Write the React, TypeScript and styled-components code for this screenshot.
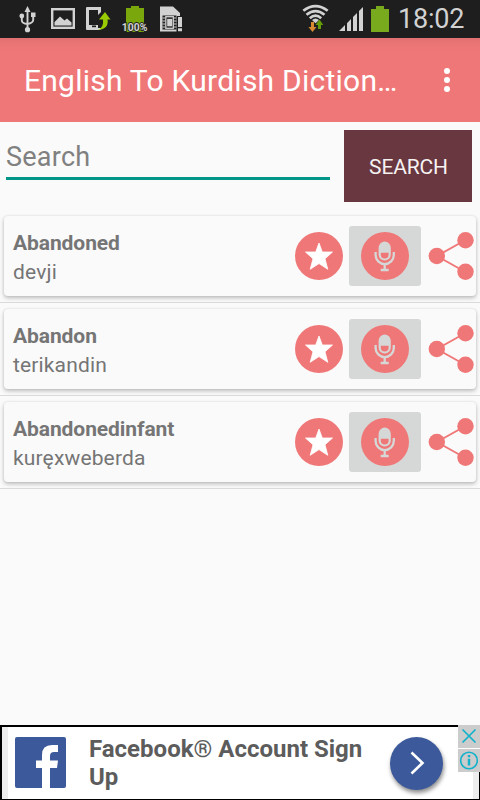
import React from 'react';
import styled, { createGlobalStyle } from 'styled-components';

const CORAL = '#f07777';

const GlobalStyle = createGlobalStyle`
  * { box-sizing: border-box; }
  html, body { margin: 0; padding: 0; }
  body { background: #fafafa; font-family: Roboto, sans-serif; overflow: hidden; }
  button { font-family: inherit; border: 0; padding: 0; margin: 0; background: none; }
  svg { display: block; flex: none; }
`;

const Screen = styled.div`
  width: 480px;
  height: 800px;
  display: flex;
  flex-direction: column;
  background: #fafafa;
`;

const StatusBar = styled.header`
  height: 38px;
  flex: none;
  display: flex;
  justify-content: space-between;
  background: #1e1e1e;
`;

const StatusGroup = styled.div`
  display: flex;
`;

const Clock = styled.span`
  width: 88px;
  padding-left: 6px;
  font-size: 27px;
  line-height: 39px;
  letter-spacing: -0.2px;
  color: #d2d2d2;
`;

const AppBar = styled.div`
  height: 84px;
  flex: none;
  display: flex;
  align-items: center;
  justify-content: space-between;
  padding: 0 30px 0 24px;
  background: linear-gradient(#e07070 0, #e97474 4px, ${CORAL} 15px);
`;

const Title = styled.h1`
  margin: 0;
  padding-top: 2px;
  font-size: 30px;
  font-weight: 400;
  line-height: 36px;
  letter-spacing: 0.24px;
  white-space: nowrap;
  color: #fff;
`;

const SearchRow = styled.div`
  height: 94px;
  flex: none;
  display: flex;
  align-items: flex-start;
  justify-content: space-between;
  padding: 8px 8px 0 6px;
`;

const SearchField = styled.input`
  width: 324px;
  height: 50px;
  padding: 6px 0 0;
  border: 0;
  border-bottom: 3px solid #009688;
  border-radius: 0;
  outline: 0;
  background: transparent;
  font: 400 27px Roboto, sans-serif;
  letter-spacing: 0.25px;
  &::placeholder { color: #808080; opacity: 1; }
`;

const SearchButton = styled.button`
  width: 128px;
  height: 72px;
  padding: 2px 0 0 1px;
  background: #693740;
  color: #f5f2f2;
  font-size: 21px;
  letter-spacing: -0.15px;
`;

const WordList = styled.ul`
  flex: 1;
  margin: 0;
  padding: 0;
  list-style: none;
`;

const WordItem = styled.li`
  height: 93px;
  padding: 0 4px;
`;

const Card = styled.article`
  height: 80px;
  display: flex;
  align-items: center;
  padding: 0 2px 0 9px;
  border-radius: 4px;
  background: #fafafa;
  box-shadow: 0 2px 4px rgba(0, 0, 0, 0.25), 0 0 2px rgba(0, 0, 0, 0.1);
`;

const Divider = styled.div`
  height: 1px;
  margin: 6px -4px 0;
  background: #dadada;
`;

const Words = styled.div`
  width: 282px;
  padding-top: 3px;
  font-size: 21px;
  line-height: 29px;
  color: #757575;
`;

const Term = styled.div`
  font-weight: 700;
  letter-spacing: -0.08px;
`;

const Meaning = styled.div`
  letter-spacing: 0.15px;
`;

const MicButton = styled.button`
  width: 72px;
  height: 60px;
  margin: 0 7px 0 6px;
  display: grid;
  place-items: center;
  border-radius: 3px;
  background: #d6d8d7;
`;

const AdBanner = styled.aside`
  position: relative;
  height: 75px;
  flex: none;
  display: flex;
  align-items: flex-start;
  border: solid #000;
  border-width: 2px 1px 1px 2px;
  background: linear-gradient(90deg, #ededed 6px, #fff 6px, #fff 471px, #ededed 471px);
`;

const FacebookTile = styled.div`
  width: 51px;
  height: 51px;
  margin: 10px 23px 0 13px;
  border-radius: 2px;
  overflow: hidden;
  background: #3c5a9b;
`;

const AdText = styled.p`
  width: 301px;
  margin: 8px 0 0;
  font-size: 24px;
  font-weight: 700;
  line-height: 28px;
  color: #5c5c5c;
`;

const AdArrow = styled.div`
  width: 53px;
  height: 53px;
  margin-top: 10px;
  border-radius: 50%;
  background: #3c5a9b;
  box-shadow: 1px 3px 4px rgba(0, 0, 0, 0.45);
`;

const AdControls = styled.div`
  position: absolute;
  top: -2px;
  right: -1px;
  width: 22px;
  display: grid;
  grid-template-rows: 23px 23px;
  gap: 1px;
  background: #fff;
`;

const AdControl = styled.div`
  display: grid;
  place-items: center;
  background: #cccccc;
`;

const NotificationIcons = () => (
  <svg width="200" height="38" viewBox="0 0 200 38" fill="#d2d2d2">
    <g stroke="#d2d2d2" strokeWidth="1.9" fill="none">
      <path d="M27.5 9V30M21.8 17V20.5Q22 23.5 27.5 24M33.2 15V20Q33 23 27.5 24" />
    </g>
    <path d="M27.5 6L30.5 12H24.5Z" />
    <circle cx="21.8" cy="16" r="2.4" />
    <rect x="31" y="12.5" width="4.5" height="4.5" />
    <circle cx="27.5" cy="29.7" r="2.6" />
    <rect x="52.2" y="9.2" width="21.6" height="18.6" fill="none" stroke="#d2d2d2" strokeWidth="2.4" />
    <path d="M54.5 25.5V22L60 16.5L64.5 20.5L67 18.5L71.5 22.5V25.5Z" />
    <path d="M87 7H101V12L98 15V10H89V25H98V28H102L100 30H87Q86 30 86 29V8Q86 7 87 7Z" />
    <rect x="92" y="25.5" width="4" height="1.7" fill="#1e1e1e" />
    <path d="M98 30Q104 27 103 19.5H99L105 12L110.5 19.5H107.5Q109 29 98 30Z" fill="#99cc00" />
    <path d="M126 8H131V6H139V8H144V32H126Z" fill="#7aa80c" />
    <text x="121.8" y="31" fontSize="11" fontWeight="700" fontFamily="Roboto, sans-serif" textLength="25.5" lengthAdjust="spacingAndGlyphs" stroke="#222" strokeWidth="1.8" paintOrder="stroke">100%</text>
    <path d="M160 6.5H173L180 13V17H176.5V31.5H160Z" />
    <rect x="162.5" y="15.5" width="14" height="14" fill="#222" />
    <rect x="165.8" y="16.7" width="7.5" height="11.6" fill="none" stroke="#d2d2d2" strokeWidth="1.3" />
    <rect x="167.2" y="18.9" width="5" height="7.4" />
    <path d="M162.5 18H165M162.5 21H165M162.5 24H165M162.5 27H165M174 18H176.5M174 21H176.5M174 24H176.5M174 27H176.5" stroke="#d2d2d2" strokeWidth="1" />
    <path d="M177 16H183V32H177Z" fill="#1e1e1e" />
    <path d="M178 17H182V27H178ZM178 28.3H182V31.3H178Z" />
  </svg>
);

const SystemIcons = () => (
  <svg width="92" height="38" viewBox="300 0 92 38" fill="#d2d2d2">
    <g fill="none" stroke="#d2d2d2" strokeWidth="2.7">
      <path d="M303.3 10.8Q315.5 1.3 327.7 10.8" />
      <path d="M306.5 14.7Q315.5 7.4 324.5 14.7" />
      <path d="M309.8 18.2Q315.5 13.2 321.2 18.2" />
    </g>
    <path d="M312 20Q315.5 17 319 20L315.5 23.3Z" />
    <path d="M311 22H314V27H316.5L312.5 32L308.5 27H311Z" fill="#d88a32" />
    <path d="M318 29V25H315.5L319.5 19.5L323.3 25H321V29Z" fill="#649b09" />
    <path d="M339 31L345 25V31ZM347 23.2L351 19V31H347ZM353 17L357 13V31H353ZM359 11L363 7V31H359Z" />
    <path d="M371 9H376V6H384V9H389V32H371Z" fill="#79a91c" />
  </svg>
);

const MoreIcon = () => (
  <svg width="6" height="26" fill="#fff">
    <circle cx="3" cy="4" r="3" />
    <circle cx="3" cy="13" r="3" />
    <circle cx="3" cy="22" r="3" />
  </svg>
);

const StarIcon = () => (
  <svg width="48" height="48">
    <circle cx="24" cy="24" r="24" fill={CORAL} />
    <path d="M24 11L27.3 20H37.5L30 26.8L32.8 37.3L24 31.6L15.2 37.3L18 26.8L10.5 20H20.7Z" fill="#fff" stroke="#fff" strokeWidth="0.8" strokeLinejoin="round" />
  </svg>
);

const MicIcon = () => (
  <svg width="48" height="48">
    <circle cx="24" cy="24" r="24" fill={CORAL} />
    <path d="M17.6 15.7a6.1 6.1 0 0 1 12.2 0V22.5a6.1 6.1 0 0 1-12.2 0Z" fill="#d6d8d7" />
    <path d="M19.8 20.8H27.6V22.6a3.9 3.9 0 0 1-7.8 0Z" fill={CORAL} />
    <path d="M14.6 20V23a9.1 9.1 0 0 0 18.2 0V20M23.7 32V38M19.7 38H27.7" fill="none" stroke="#d6d8d7" strokeWidth="2.3" />
  </svg>
);

const ShareIcon = () => (
  <svg width="46" height="48" fill={CORAL}>
    <path d="M8.8 24L37.5 8M8.8 24L37.5 40" stroke={CORAL} strokeWidth="2" />
    <circle cx="8.8" cy="24" r="8.2" />
    <circle cx="37.5" cy="8.2" r="8.2" />
    <circle cx="37.5" cy="39.8" r="8.2" />
  </svg>
);

const entries = [
  { term: 'Abandoned', meaning: 'devji' },
  { term: 'Abandon', meaning: 'terikandin' },
  { term: 'Abandonedinfant', meaning: 'kuręxweberda' },
];

export default function App() {
  return (
    <Screen>
      <GlobalStyle />
      <StatusBar>
        <NotificationIcons />
        <StatusGroup>
          <SystemIcons />
          <Clock>18:02</Clock>
        </StatusGroup>
      </StatusBar>
      <AppBar>
        <Title>English To Kurdish Diction…</Title>
        <MoreIcon />
      </AppBar>
      <SearchRow>
        <SearchField placeholder="Search" />
        <SearchButton>SEARCH</SearchButton>
      </SearchRow>
      <WordList>
        {entries.map(({ term, meaning }) => (
          <WordItem key={term}>
            <Card>
              <Words>
                <Term>{term}</Term>
                <Meaning>{meaning}</Meaning>
              </Words>
              <StarIcon />
              <MicButton aria-label="Pronounce"><MicIcon /></MicButton>
              <ShareIcon />
            </Card>
            <Divider />
          </WordItem>
        ))}
      </WordList>
      <AdBanner>
        <FacebookTile>
          <svg width="51" height="51">
            <path d="M27 51V31H21V23.5H27V18Q27 8 37 8H43V15H39Q35 15 35 19V23.5H43L42 31H35V51Z" fill="#fff" />
          </svg>
        </FacebookTile>
        <AdText>Facebook® Account Sign Up</AdText>
        <AdArrow>
          <svg width="53" height="53">
            <path d="M21.5 15.5L32.5 26L21.5 36.5" fill="none" stroke="#fff" strokeWidth="2.6" />
          </svg>
        </AdArrow>
        <AdControls>
          <AdControl>
            <svg width="22" height="23" fill="none" stroke="#14b1ca" strokeWidth="1.7">
              <path d="M4.5 4.5L17.5 17.5M17.5 4.5L4.5 17.5" />
            </svg>
          </AdControl>
          <AdControl>
            <svg width="22" height="23" fill="none" stroke="#14b1ca">
              <circle cx="11" cy="11.5" r="8.3" strokeWidth="1.6" />
              <path d="M11 9.8V16.5M11 6V8.3" strokeWidth="2.4" />
            </svg>
          </AdControl>
        </AdControls>
      </AdBanner>
    </Screen>
  );
}
